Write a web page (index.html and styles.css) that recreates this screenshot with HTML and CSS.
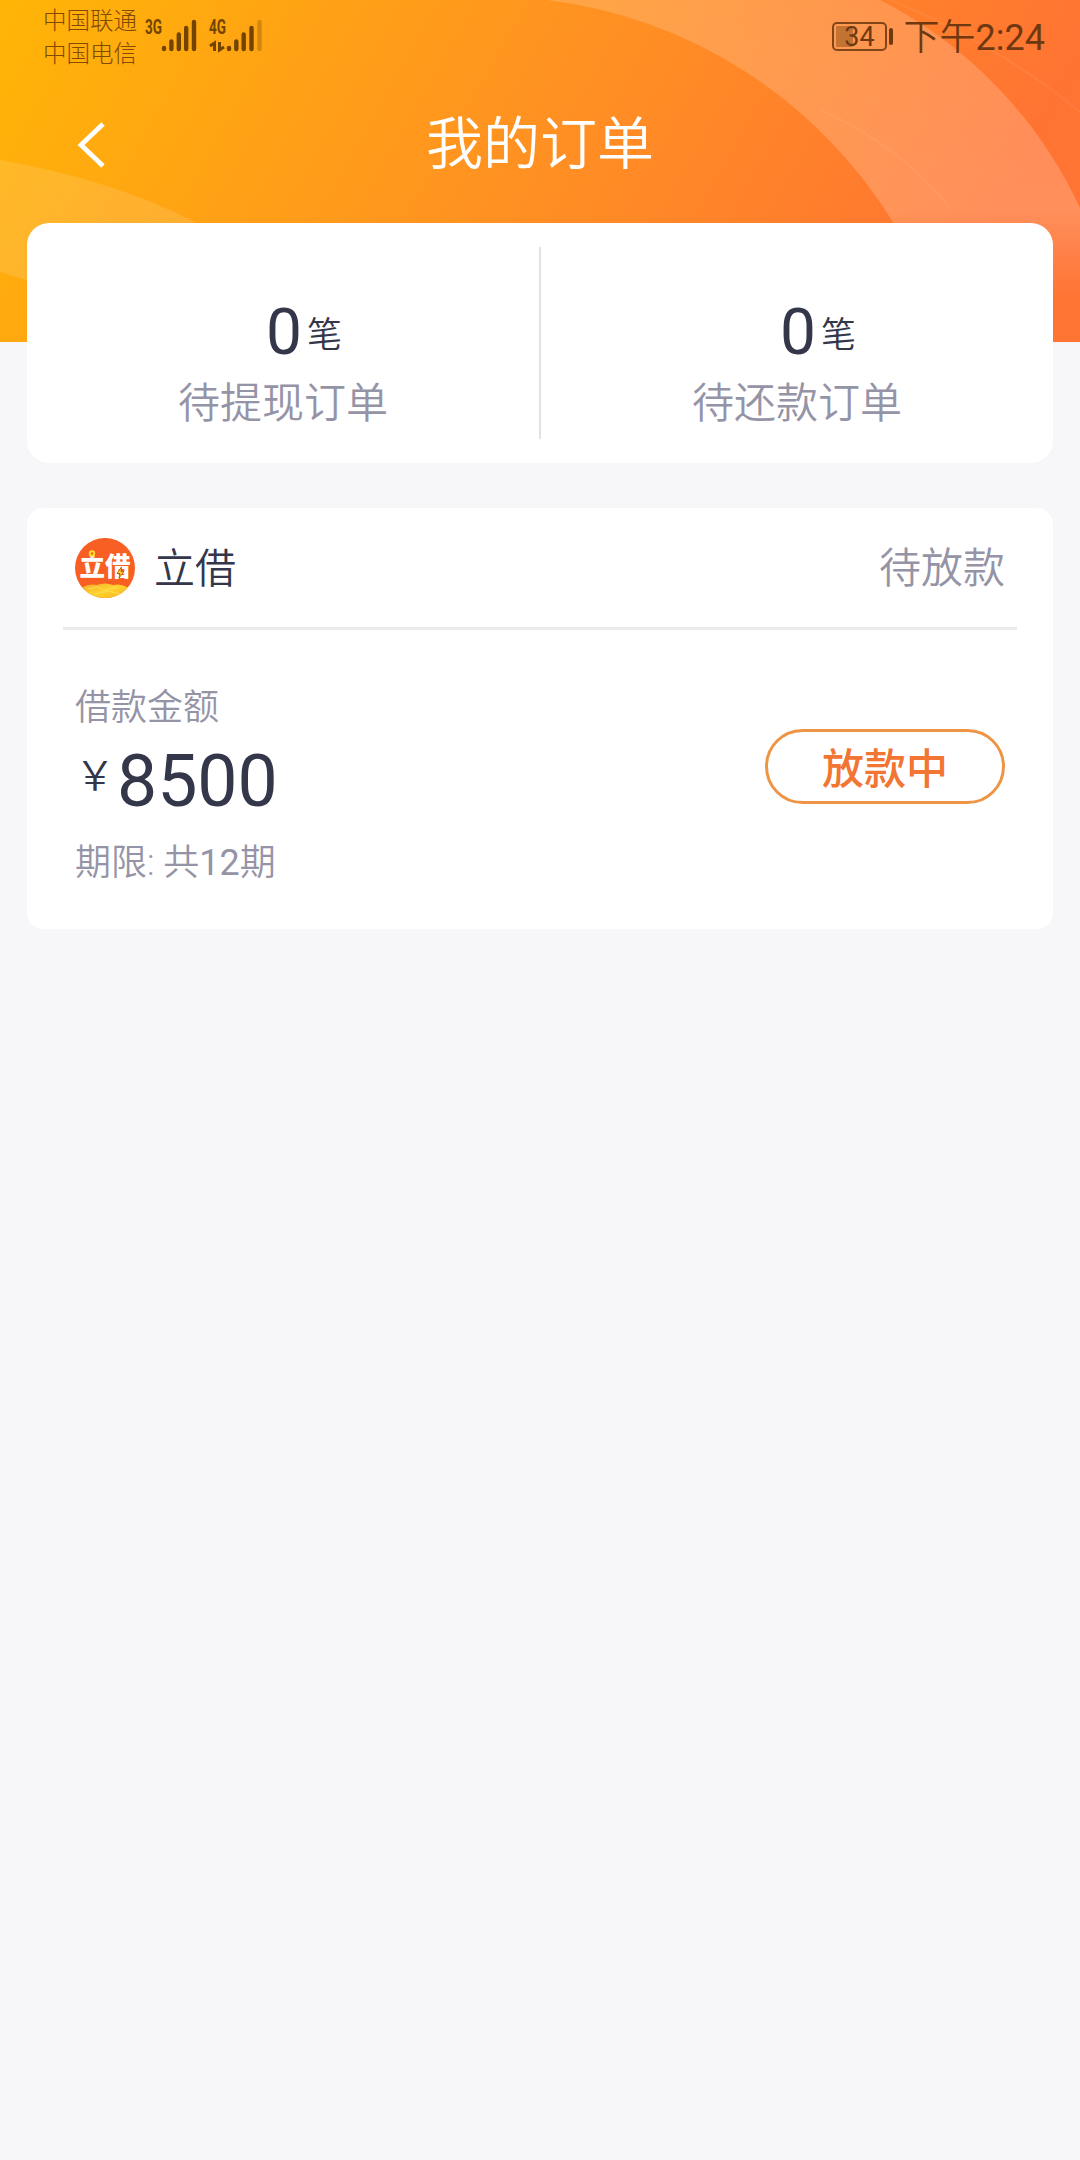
FILE: index.html
```
<!DOCTYPE html>
<html lang="zh-CN">
<head>
<meta charset="utf-8">
<title>我的订单</title>
<link rel="stylesheet" href="styles.css">
</head>
<body>
<div class="screen">
  <svg class="backdrop" width="1080" height="342" viewBox="0 0 1080 342" aria-hidden="true">
    <defs>
      <linearGradient id="base" gradientUnits="userSpaceOnUse" x1="0" y1="0" x2="850" y2="480">
        <stop offset="0" stop-color="#ffb506"/>
        <stop offset=".5" stop-color="#ff9420"/>
        <stop offset="1" stop-color="#ff7333"/>
      </linearGradient>
      <linearGradient id="ring" gradientUnits="userSpaceOnUse" x1="0" y1="0" x2="0" y2="300">
        <stop offset="0" stop-color="#fff" stop-opacity=".17"/>
        <stop offset=".7" stop-color="#fff" stop-opacity=".2"/>
        <stop offset="1" stop-color="#fff" stop-opacity="0"/>
      </linearGradient>
    </defs>
    <rect width="1080" height="342" fill="url(#base)"/>
    <path d="M548 0A475 475 0 0 1 893 222L920 342H1080V208A443 443 0 0 0 880 0Z" fill="url(#ring)"/>
    <path d="M0 160Q110 179 195 222L120 300Q60 292 0 272Z" fill="#fff" opacity=".12"/>
    <path d="M890 0Q1000 45 1080 112M820 110Q900 145 950 208" fill="none" stroke="#fff" stroke-width="2" opacity=".06"/>
  </svg>

  <div class="statusbar">
    <div class="carriers"><span>中国联通</span><span>中国电信</span></div>
    <svg class="signals" width="122" height="36" viewBox="-1 0 122 36">
      <g class="net"><text x="1" y="15.500" textLength="17" lengthAdjust="spacingAndGlyphs">3G</text><text x="65" y="15.500" textLength="17" lengthAdjust="spacingAndGlyphs">4G</text></g>
      <g stroke="#734300" stroke-width="4.4" stroke-linecap="round">
        <path d="M20 30v1M27.400 23.500v7.500M34.800 16.500v14.500M42.200 10v21M50 4v27"/>
        <path d="M85 30v1M92.300 23.500v7.500M99.700 16.500v14.500M107.500 10v21"/>
        <path d="M115.500 4v27" opacity=".3"/>
      </g>
      <path d="M70.500 33V25l-4.500 3M75.500 24v8l4.500-3" fill="none" stroke="#734300" stroke-width="3"/>
    </svg>
    <div class="clock">
      <svg width="62" height="30" viewBox="0 0 62 30">
        <rect x="1" y="1" width="53" height="27" rx="4" fill="none" stroke="#814517" stroke-width="2"/>
        <rect x="4" y="4" width="17" height="21" rx="1" fill="#9b5a20" opacity=".6"/>
        <rect x="57" y="6" width="4" height="17" rx="2" fill="#6d3a0c"/>
        <text class="level" x="27.500" y="24" text-anchor="middle">34</text>
      </svg>
      <span class="time">下午<b>2:24</b></span>
    </div>
  </div>

  <header class="titlebar">
    <svg class="back" width="30" height="46" viewBox="0 0 30 46"><path d="M27 2L5 23L27 44" fill="none" stroke="#fff" stroke-width="4.800"/></svg>
    <h1>我的订单</h1>
  </header>

  <section class="summary">
    <div class="stat"><div class="count"><b>0</b><span>笔</span></div><div class="label">待提现订单</div></div>
    <div class="stat"><div class="count"><b>0</b><span>笔</span></div><div class="label">待还款订单</div></div>
  </section>

  <section class="order">
    <div class="order-head">
      <svg class="logo" width="60" height="60" viewBox="0 0 60 60">
        <defs>
          <clipPath id="disc"><circle cx="30" cy="30" r="30"/></clipPath>
          <linearGradient id="gold" x1="0" y1="0" x2="1" y2="1"><stop offset="0" stop-color="#f3ad2c"/><stop offset=".5" stop-color="#ffd22e"/><stop offset="1" stop-color="#f8b51f"/></linearGradient>
        </defs>
        <g clip-path="url(#disc)">
          <rect width="60" height="60" fill="#f85f22"/>
          <path d="M6 50Q14 45 22 47Q30 44 38 47Q46 45 54 50V60H6Z" fill="url(#gold)"/>
          <path d="M13 51L22 49L30 52L42 49M20 56L34 53L44 56" fill="none" stroke="#ffe263" stroke-width="1" opacity=".7"/>
        </g>
        <text class="logo-text" x="30" y="38" text-anchor="middle" textLength="51" lengthAdjust="spacingAndGlyphs">立借</text>
        <circle cx="17" cy="15.500" r="2.200" fill="#fa5e20" stroke="#ffd92e" stroke-width="2"/>
        <path d="M46.500 29L42 35.500H45L44 40L49 33.500H46Z" fill="#ffd52b" stroke="#a34712" stroke-width=".8"/>
      </svg>
      <span class="brand">立借</span>
      <span class="state">待放款</span>
    </div>
    <div class="order-body">
      <div class="details">
        <div class="caption">借款金额</div>
        <div class="amount"><span>￥</span><b>8500</b></div>
        <div class="term">期限: 共<b>12</b>期</div>
      </div>
      <button class="action" type="button">放款中</button>
    </div>
  </section>
</div>
</body>
</html>
```
FILE: styles.css
```
* { box-sizing: border-box; }
body {
  margin: 0;
  background: #f7f7f9;
  font-family: Roboto, "Noto Sans CJK SC", sans-serif;
  font-weight: 350;
  color: #34364a;
}
b { font-weight: 400; }
.screen {
  position: relative;
  display: flex;
  flex-direction: column;
  width: 1080px;
  min-height: 2160px;
}
.backdrop { position: absolute; left: 0; top: 0; z-index: -1; }

.statusbar {
  display: flex;
  height: 74px;
  padding: 0 35px 0 43px;
  color: #814a07;
}
.carriers {
  display: flex;
  flex-direction: column;
  width: 100px;
  padding-top: 5px;
  font-size: 23.500px;
  font-weight: 300;
  line-height: 33px;
  white-space: nowrap;
}
.signals { margin-top: 18px; overflow: visible; }
.net text { font: 700 20px "Roboto", sans-serif; fill: #734300; }
.clock {
  display: flex;
  align-items: center;
  gap: 10px;
  margin-left: auto;
  color: #6f3810;
}
.clock svg { display: block; }
.level { font: 400 27px Roboto, sans-serif; fill: #6d3a12; }
.time { font-size: 36px; line-height: 74px; padding-top: 2px; }

.titlebar {
  display: grid;
  grid-template-columns: 120px 1fr 120px;
  align-items: center;
  height: 149px;
  padding: 0 35px 8px;
  color: #fff;
}
.back { margin-left: 41px; }
h1 {
  margin: 0;
  font-size: 57px;
  font-weight: 350;
  line-height: 80px;
  text-align: center;
}

.summary {
  display: flex;
  height: 240px;
  margin: 0 27px;
  padding: 24px 0;
  border-radius: 22px;
  background: #fff;
}
.stat {
  flex: 1;
  display: flex;
  flex-direction: column;
  align-items: center;
  padding-top: 46px;
}
.stat + .stat { border-left: 2px solid #e2e2e6; }
.count {
  display: flex;
  align-items: flex-start;
  gap: 5px;
  height: 80px;
  padding-left: 42px;
}
.count b { font-size: 64px; line-height: 79px; }
.count span { font-size: 35px; line-height: 86px; }
.label { color: #9594a6; font-size: 42px; line-height: 61px; }

.order {
  height: 421px;
  margin: 45px 27px 0;
  border-radius: 16px;
  background: #fff;
}
.order-head {
  display: flex;
  align-items: center;
  height: 122px;
  margin: 0 36px;
  padding: 0 12px;
  border-bottom: 3px solid #ebebee;
  font-size: 41px;
  line-height: 60px;
}
.logo-text { font: 900 26px "Noto Sans CJK SC", sans-serif; fill: #fff; }
.brand { margin: 3px 0 0 19px; }
.state { margin: 3px 0 0 auto; color: #9594a6; font-size: 42px; }
.order-body {
  display: flex;
  align-items: flex-start;
  justify-content: space-between;
  padding: 51px 48px 0;
}
.caption, .term { color: #9594a6; font-size: 36px; line-height: 54px; }
.amount { display: flex; align-items: flex-start; height: 101px; }
.amount span { width: 42px; font-family: "Noto Sans CJK SC", sans-serif; font-size: 40px; line-height: 76px; }
.amount b { font-size: 71.500px; line-height: 94px; }
.action {
  width: 240px;
  height: 75px;
  margin-top: 48px;
  padding: 3px 0 0;
  border: 3px solid #ed9545;
  border-radius: 38px;
  background: #fff;
  color: #f27533;
  font: 500 42px/69px Roboto, "Noto Sans CJK SC", sans-serif;
}
```
